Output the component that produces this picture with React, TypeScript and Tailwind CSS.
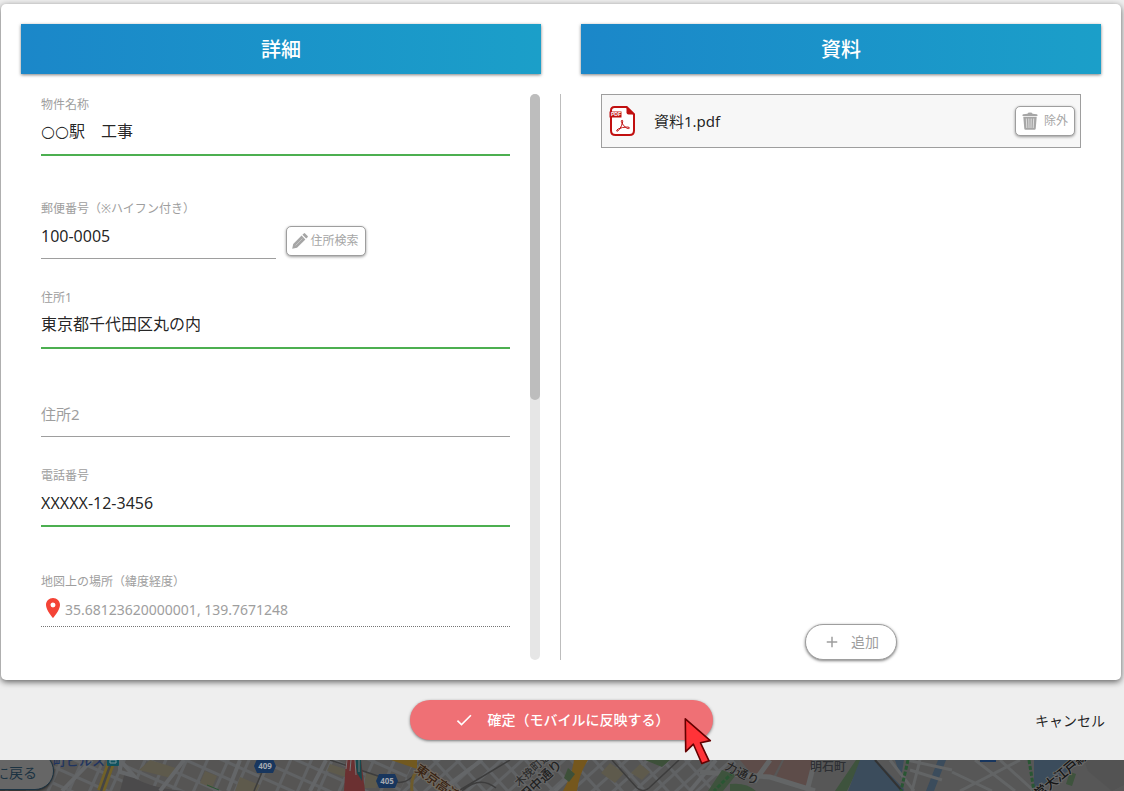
import React, { useState } from "react";
import { MdAdd, MdCheck, MdPlace } from "react-icons/md";

interface FieldProps {
  readonly id: string;
  readonly label: string;
  readonly defaultValue?: string;
  readonly valid?: boolean;
  readonly className?: string;
  readonly inputClassName?: string;
}

const Field: React.FC<FieldProps> = ({
  id,
  label,
  defaultValue = "",
  valid = false,
  className = "",
  inputClassName = "pb-1",
}) => (
  <div className={className}>
    <label htmlFor={id} className="block h-5 text-xs leading-[22px] text-[#9e9e9e]">
      {label}
    </label>
    <input
      id={id}
      type="text"
      defaultValue={defaultValue}
      className={`block w-full text-base text-black/87 outline-none ${inputClassName} ${
        valid ? "h-[42px] border-b-2 border-[#4caf50]" : "h-[41px] border-b border-[#9e9e9e]"
      }`}
    />
  </div>
);

const PencilIcon = () => (
  <svg viewBox="0 0 16 16" className="size-4 shrink-0" fill="#a6a6a6" aria-hidden="true">
    <path d="M.2 15.8 1.2 11 9.6 2.6 13.4 6.4 5 14.8zM10.4 1.8 11.8.4q.6-.6 1.3 0l2.5 2.5q.6.7 0 1.3l-1.4 1.4z" />
    <path d="m3.6 12.4 6.8-6.8" stroke="#c4c4c4" strokeWidth="1" />
  </svg>
);

const TrashIcon = () => (
  <svg viewBox="0 0 16 18" className="h-[18px] w-4 shrink-0" aria-hidden="true">
    <path d="M5.5 1.8Q5.5.4 8 .4t2.5 1.4l4.3.5q.7.2.7 1V4H.5v-.7q0-.8.7-1z" fill="#a6a6a6" />
    <path d="M1.3 4.8h13.4l-1 12q-.1 1-1.2 1h-9q-1.1 0-1.2-1z" fill="#a6a6a6" />
    <path d="m4.3 6.5.5 9.5M6.8 6.5l.2 9.5M9.2 6.5 9 16M11.7 6.5l-.5 9.5" stroke="#dedede" strokeWidth="1" />
  </svg>
);

const PdfIcon = () => (
  <svg viewBox="0 0 26 30" className="h-[30px] w-[26px] shrink-0" aria-hidden="true">
    <path d="M5.5 1h12.2L25 8.2v16.3q0 4.5-4.5 4.5h-14Q2 29 2 24.5v-20Q2 1 5.5 1z" fill="#fff" stroke="#c11010" strokeWidth="2" />
    <path d="M17.5.5 25.5 8.5h-6q-2 0-2-2z" fill="#c11010" />
    <path d="M.5 5.5h12v6H.5z" fill="#c11010" />
    <text x="2" y="10.3" fontSize="5" fontWeight="700" fill="#fff" fontFamily="Liberation Sans, sans-serif">
      PDF
    </text>
    <path
      d="M12.5 14.5q1.5-.8 1.2 1.3-.8 4.2-3.3 7.6-1.5 2-2.5 1.8-1-.8 1.2-2.2 4-2 9.5-2 2 .1 1.8 1.2-.8.9-2.8-.2-3.5-2.2-5-5.5-.5-1.4-.1-2z"
      fill="none"
      stroke="#c11010"
      strokeWidth="1"
    />
  </svg>
);

const PointerIcon = () => (
  <svg viewBox="0 0 28 49" className="h-[49px] w-7" aria-hidden="true">
    <path
      d="M1.3 2.8 26.3 24.6 16.5 26.8 25 44.8 17.8 47.5 9.4 28.2 1.7 35.6z"
      fill="#ff3338"
      stroke="#640000"
      strokeWidth="1.6"
      strokeLinejoin="round"
    />
  </svg>
);

const RouteShield = ({ x, y, label }: { x: number; y: number; label: string }) => (
  <g transform={`translate(${x} ${y})`}>
    <path d="M-8-7H8l3 7-3 7H-8l-3-7z" fill="#18365e" />
    <text y="3" textAnchor="middle" fontSize="8" fontWeight="700" fill="#a3a8b0">
      {label}
    </text>
  </g>
);

const MapStrip = () => (
  <svg viewBox="0 0 1124 31" preserveAspectRatio="xMinYMin slice" className="block h-full w-full" aria-hidden="true">
    <defs>
      <pattern id="blocksA" width="19" height="15" patternUnits="userSpaceOnUse" patternTransform="rotate(24)">
        <rect width="19" height="15" fill="#606264" />
        <rect x="1" y="1" width="16" height="12" fill="#565554" />
      </pattern>
      <pattern id="blocksB" width="17" height="14" patternUnits="userSpaceOnUse" patternTransform="rotate(-42)">
        <rect width="17" height="14" fill="#606264" />
        <rect x="1" y="1" width="14" height="11" fill="#555" />
      </pattern>
    </defs>

    <rect width="1124" height="31" fill="url(#blocksA)" />
    <path d="M415 0h325v31H400z" fill="url(#blocksB)" />
    <path d="m150 0 26 8-5 10-32-8zM205 11l12 5-5 12-12-5zM240 17l20 8-3 6h-22zM330 4l18 6-3 7-18-6zM610 3l14 10-9 10-14-10zM640 4l10 8-8 8-11-7zM366 12l16 6-6 10h-12z" fill="#5e5a4c" />
    <path d="M125 12q20 16 60 19h-65z" fill="#4b4a4b" />
    <path d="m120 0 14 16-14-4zM62 31 92 0M160 31l24-31M228 31l12-31M310 31l16-31M440 31 482 0M555 31l32-31M690 31l26-31" fill="none" stroke="#646668" strokeWidth="4" />
    <path d="M262 12 254 31M330 0l60 20q12 6 22-3l8-9M462 31q18-16 34-3M460 30l50-30M612 0l25 28q6 5 12 0l30-28" fill="none" stroke="#3d3d3d" strokeWidth="1.5" />

    {/* expressways */}
    <path d="M112 0 101 31" stroke="#716128" strokeWidth="8" />
    <path d="M112 0 101 31" stroke="#454545" strokeWidth="2.5" />
    <path d="M391 0h26v9z" fill="#72591f" />
    <path d="M420 8q-10 8-8 23" fill="none" stroke="#6d5b2c" strokeWidth="3" />
    <path d="M574 0h14q-9 14-11 31h-14q9-16 11-31z" fill="#75571d" />
    <path d="M346 0h15l4 31h-21z" fill="#6b3031" />
    <path d="m355 0 2 13 5 8-1-21z" fill="#17494d" />
    <path d="m347 0-1 9M351 0l-1 11M355 0l1 15M359 0v12" stroke="#777" strokeWidth="1" />
    <path d="m568 8 7 6-6 8-5-4zM645 0h25l-8 7z" fill="#3d5039" />
    <path d="m207 25 12 5" stroke="#295633" strokeWidth="1" />

    {/* waterfront */}
    <path d="M740 0h384v31H710z" fill="#575757" />
    <path d="M740 0h42l-10 19-22-7zM784 0h31l-8 27-32-8z" fill="#5d4c49" />
    <path d="M770 0 754 22M700 12l70 5 45 14M815 0l-8 31" fill="none" stroke="#636566" strokeWidth="5" />
    <path d="M722 10 708 31h15l13-16zM730 24q16-2 26 7h-26zM856 0h6l-15 31h-12z" fill="#3e533d" />
    <path d="M860 0h16l30 31h-58z" fill="#3b4c5c" />
    <path d="M905 0h35l-12 31h-24z" fill="#555" />
    <path d="M938 0h8l-12 31h-8zM1034 0h50l-45 31h-5zM895 0h9l-3 18z" fill="#3b4c5c" />
    <path d="m890 0 24 31M907 0l45 10M910 10l32 10M920 0l-8 31M960 31l60-31M952 12l40 19M1000 0l34 31M975 0l40 31" fill="none" stroke="#626465" strokeWidth="3" />
    <path d="m875 0 27 31" stroke="#333" strokeWidth="2" />
    <path d="M908 0 901 31M1029 0l5 31M733 12 714 31" fill="none" stroke="#295633" strokeWidth="3" strokeDasharray="4 2" />
    <path d="M980 0h16v2h-16z" fill="#18365e" />
    <path d="M1084 0h40v25l-12 6-24-20z" fill="#535353" />
    <path d="m1070 12 6 2-4 12-6-2z" fill="#3e533d" />

    <RouteShield x={265} y={6} label="409" />
    <RouteShield x={387} y={21} label="405" />
    <g fontSize="13" fontWeight="500">
      <text x="53" y="5" fill="#1f3460">
        町ビルス
      </text>
      <rect x="107" y="-6" width="12" height="12" rx="1" fill="#10525e" />
      <path d="M110 3V0h6v3z" fill="none" stroke="#7b9499" />
      <text transform="translate(414 11) rotate(36)" fill="#382313" stroke="#70695e" strokeWidth="2" paintOrder="stroke">
        東京高速
      </text>
      <text transform="translate(519 27) rotate(-43)" fontSize="11" fill="#2e2e2e" stroke="#666" strokeWidth="2" paintOrder="stroke">
        木挽町通
      </text>
      <text transform="translate(525 41) rotate(-43)" fill="#222" stroke="#666" strokeWidth="2" paintOrder="stroke">
        田中通り
      </text>
      <text transform="translate(724 9) rotate(27)" fontSize="12" fill="#252525" stroke="#666" strokeWidth="1" paintOrder="stroke">
        力通り
      </text>
      <text x="810" y="11" fontSize="12" fill="#2d2f33">
        明石町
      </text>
      <text transform="translate(1039 39) rotate(-40)" fill="#151515" stroke="#686868" strokeWidth="2" paintOrder="stroke">
        営大江戸線
      </text>
    </g>
  </svg>
);

const SectionTitle = ({ children }: { children: React.ReactNode }) => (
  <h2 className="mx-5 flex h-[50px] items-center justify-center bg-linear-to-r from-[#1b87c9] to-[#1b9fc9] pt-0.5 text-xl font-medium text-white shadow-[0_1px_3px_rgba(0,0,0,0.5)]">
    {children}
  </h2>
);

export default function App() {
  const [files, setFiles] = useState(["資料1.pdf"]);

  return (
    <div className="flex min-h-screen flex-col bg-[#eeeeee] font-['Noto_Sans','Noto_Sans_CJK_JP',sans-serif]">
      <main className="mt-1 mr-[3px] ml-px grid grid-cols-2 rounded-[5px] bg-white pt-5 pb-5 shadow-[0_2px_6px_rgba(0,0,0,0.6)]">
        <section className="flex flex-col">
          <SectionTitle>詳細</SectionTitle>
          <div className="mt-5 flex grow border-r border-[#bdbdbd] pr-5 pl-10">
            <form className="mr-5 grow">
              <Field
                id="name"
                label="物件名称"
                defaultValue="○○駅　工事"
                valid
                className="mb-[42px]"
                inputClassName="pb-2 font-['Open_Sans','DejaVu_Sans','Noto_Sans_CJK_JP',sans-serif]"
              />
              <div className="mb-7 flex items-end gap-2.5">
                <Field id="zip" label="郵便番号（※ハイフン付き）" defaultValue="100-0005" className="w-1/2" />
                <button
                  type="button"
                  className="mb-[3px] flex h-[30px] w-20 items-center justify-center gap-0.5 rounded-[5px] border border-[#9e9e9e] bg-white text-xs whitespace-nowrap text-[#a6a6a6] shadow-[0_1px_3px_rgba(0,0,0,0.4)]"
                >
                  <PencilIcon />
                  住所検索
                </button>
              </div>
              <Field
                id="address1"
                label="住所1"
                defaultValue="東京都千代田区丸の内"
                valid
                className="mb-[47px]"
                inputClassName="pb-2"
              />
              <input
                type="text"
                aria-label="住所2"
                placeholder="住所2"
                className="mb-7 block h-[41px] w-full border-b border-[#9e9e9e] pb-1 text-[15px] outline-none placeholder:text-[#9e9e9e]"
              />
              <Field id="tel" label="電話番号" defaultValue="XXXXX-12-3456" valid className="mb-11" />
              <label htmlFor="latlng" className="block h-5 text-xs leading-[22px] text-[#9e9e9e]">
                地図上の場所（緯度経度）
              </label>
              <div className="flex h-9 items-center border-b border-dotted border-[#757575]">
                <MdPlace className="mb-0.5 size-6 shrink-0 text-[#f44336]" />
                <input
                  id="latlng"
                  type="text"
                  readOnly
                  defaultValue="35.68123620000001, 139.7671248"
                  className="h-8 grow pt-0.5 text-sm text-[#9e9e9e] outline-none"
                />
              </div>
            </form>
            <div className="w-2.5 shrink-0 rounded-full bg-[#e6e6e6]">
              <div className="h-[306px] rounded-full bg-[#bdbdbd]" />
            </div>
          </div>
        </section>

        <section className="flex h-full flex-col">
          <SectionTitle>資料</SectionTitle>
          <div className="mt-5 flex min-h-[566px] grow flex-col justify-between px-10">
            <ul>
              {files.map((name) => (
                <li key={name} className="flex h-[54px] items-center border border-[#9e9e9e] bg-[#f7f7f7] pr-[5px] pl-[7px]">
                  <PdfIcon />
                  <span className="ml-[19px] grow text-[15px] text-black/87">{name}</span>
                  <button
                    type="button"
                    onClick={() => setFiles((prev) => prev.filter((f) => f !== name))}
                    className="flex h-[30px] w-[60px] items-center justify-center gap-1.5 rounded-[5px] border border-[#9e9e9e] bg-white text-xs whitespace-nowrap text-[#a6a6a6] shadow-[0_1px_3px_rgba(0,0,0,0.4)]"
                  >
                    <TrashIcon />
                    除外
                  </button>
                </li>
              ))}
            </ul>
            <button
              type="button"
              className="ml-5 flex h-9 w-[92px] items-center justify-center gap-2.5 self-center rounded-full border border-[#9e9e9e] bg-white text-sm text-[#9e9e9e] shadow-[0_1px_3px_rgba(0,0,0,0.5)]"
            >
              <MdAdd className="size-[18px]" />
              追加
            </button>
          </div>
        </section>
      </main>

      <footer className="grid h-20 grid-cols-[1fr_auto_1fr] items-center pr-[19px] pl-[18px]">
        <div className="relative z-10 col-start-2">
          <button
            type="button"
            className="flex h-10 w-[303px] items-center justify-center gap-3.5 rounded-full bg-[#ef7075] text-sm font-medium text-white shadow-[0_1px_3px_rgba(0,0,0,0.5)]"
          >
            <MdCheck className="size-5" />
            確定（モバイルに反映する）
          </button>
          <div className="pointer-events-none absolute top-4 right-px">
            <PointerIcon />
          </div>
        </div>
        <button type="button" className="justify-self-end pt-0.5 text-sm text-black/87">
          キャンセル
        </button>
      </footer>

      <div className="relative h-[31px] overflow-hidden bg-[#545454]">
        <MapStrip />
        <button
          type="button"
          className="absolute -top-2 -left-10 flex h-[38px] w-[94px] items-center justify-end rounded-full border border-[#1c3342] bg-[#666] pt-1 pr-4 text-sm whitespace-nowrap text-[#1c3342] shadow-[0_1px_3px_rgba(0,0,0,0.6)]"
        >
          に戻る
        </button>
      </div>
    </div>
  );
}
